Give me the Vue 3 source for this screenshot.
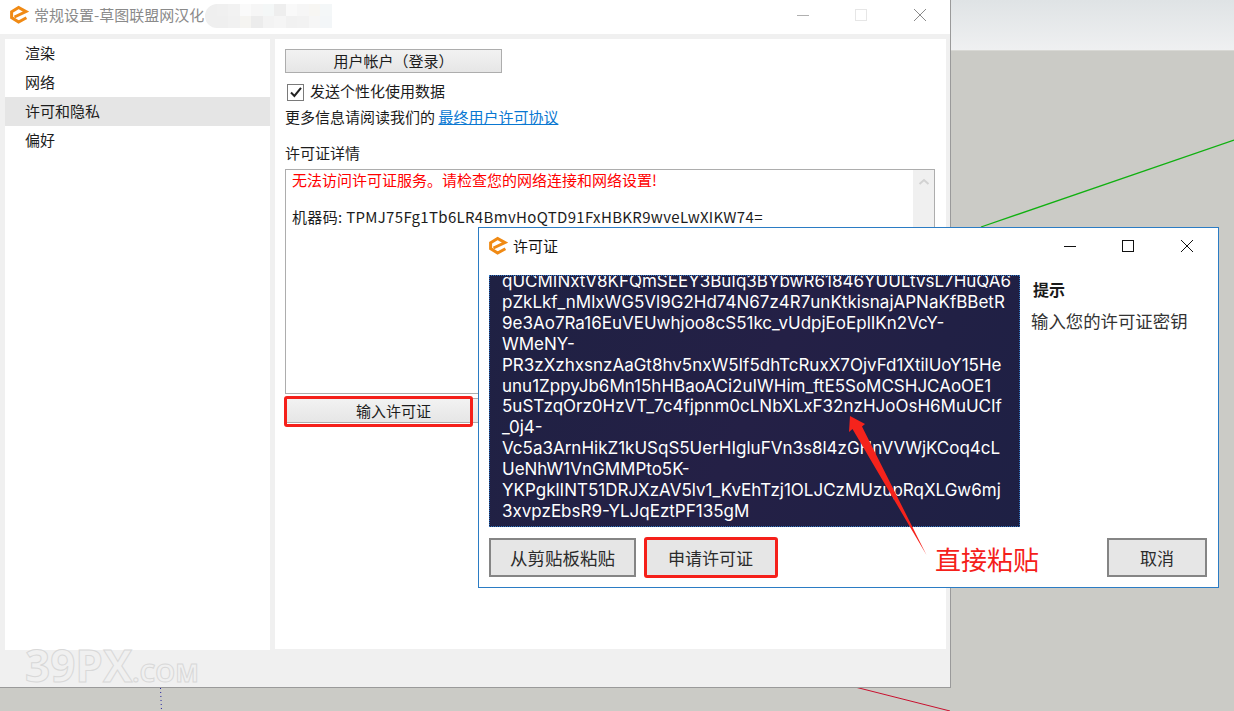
<script setup>
const menu = ['渲染', '网络', '许可和隐私', '偏好']
const keyLines = [
  'qUCMINxtV8KFQmSEEY3BuIq3BYbwR61846YUULtvsL7HuQA6',
  'pZkLkf_nMlxWG5Vl9G2Hd74N67z4R7unKtkisnajAPNaKfBBetR',
  '9e3Ao7Ra16EuVEUwhjoo8cS51kc_vUdpjEoEplIKn2VcY-',
  'WMeNY-',
  'PR3zXzhxsnzAaGt8hv5nxW5If5dhTcRuxX7OjvFd1XtilUoY15He',
  'unu1ZppyJb6Mn15hHBaoACi2uIWHim_ftE5SoMCSHJCAoOE1',
  '5uSTzqOrz0HzVT_7c4fjpnm0cLNbXLxF32nzHJoOsH6MuUCIf',
  '_0j4-',
  'Vc5a3ArnHikZ1kUSqS5UerHIgluFVn3s8l4zGHnVVWjKCoq4cL',
  'UeNhW1VnGMMPto5K-',
  'YKPgklINT51DRJXzAV5lv1_KvEhTzj1OLJCzMUzupRqXLGw6mj',
  '3xvpzEbsR9-YLJqEztPF135gM'
]
const smudge = [
  '#efefef', '#f0f0f0', '#f2f2f2', '#fafafa', '#f6f6f6', '#f4f7f7', '#eeeeee', '#f9f9f9', '#f6f6f6', '#f7f6f3', '#f4f7f8',
  '#efefef', '#efefef', '#f1f1f1', '#f5f4f1', '#ececec', '#f3f3f3', '#f5f5f5', '#f1f1f1', '#f2f2f2', '#f6f6f6', '#f3f6f8'
]
</script>

<template>
  <div class="desktop">
    <div class="sky"></div>
    <svg class="lines" width="1234" height="711" viewBox="0 0 1234 711">
      <line x1="981" y1="227" x2="1234" y2="140" stroke="#10b010" stroke-width="1.3" />
      <line x1="855" y1="687" x2="950" y2="711" stroke="#c8102e" stroke-width="1" />
      <line x1="160.5" y1="688" x2="161.5" y2="711" stroke="#2020a0" stroke-width="1" stroke-dasharray="1 3" />
    </svg>

    <section class="main-win">
      <header class="titlebar">
        <svg class="logo" width="20" height="20" viewBox="0 0 20 20">
          <path d="M5.5 12 L17 6.6 L9.6 2.4 L2.6 6.8 L2.6 12.6 L9.6 17 L17.4 12.8" fill="none" stroke="#f08a14" stroke-width="3" />
        </svg>
        <span class="title-text">常规设置-草图联盟网汉化</span>
        <div class="smudge">
          <i v-for="(c, i) in smudge" :key="i" :style="{ background: c }"></i>
        </div>
        <div class="win-ctrls">
          <svg width="14" height="14" viewBox="0 0 14 14" class="c1"><path d="M1 7.5H13" stroke="#b0b0b0" /></svg>
          <svg width="14" height="14" viewBox="0 0 14 14" class="c2"><rect x="1.5" y="1.5" width="11" height="11" fill="none" stroke="#e6e6e6" /></svg>
          <svg width="14" height="14" viewBox="0 0 14 14" class="c3"><path d="M1 1L13 13M13 1L1 13" stroke="#8a8a8a" /></svg>
        </div>
      </header>
      <div class="win-body">
        <nav class="side">
          <div v-for="m in menu" :key="m" class="side-row" :class="{ active: m === '许可和隐私' }">{{ m }}</div>
        </nav>
        <main class="content">
          <button class="btn-top">用户帐户（登录）</button>
          <label class="check-row">
            <span class="check">
              <svg width="14" height="14" viewBox="0 0 14 14"><path d="M2 7.5L5.4 11L12 2.8" fill="none" stroke="#222" stroke-width="2" /></svg>
            </span>
            <span class="check-label">发送个性化使用数据</span>
          </label>
          <p class="more">更多信息请阅读我们的 <a class="link">最终用户许可协议</a></p>
          <h4 class="details">许可证详情</h4>
          <div class="details-box">
            <div class="details-text">
              <p class="err">无法访问许可证服务。请检查您的网络连接和网络设置!</p>
              <p class="code">机器码: TPMJ75Fg1Tb6LR4BmvHoQTD91FxHBKR9wveLwXIKW74=</p>
            </div>
            <div class="scroll">
              <svg width="12" height="8" viewBox="0 0 12 8"><path d="M1.5 6L6 2L10.5 6" fill="none" stroke="#d2d2d2" stroke-width="2" /></svg>
            </div>
          </div>
          <button class="btn-license">输入许可证</button>
        </main>
      </div>
      <div class="watermark"><span class="wm-big">39PX</span><span class="wm-small">.COM</span></div>
    </section>

    <section class="dialog">
      <header class="dlg-title">
        <svg class="logo" width="20" height="20" viewBox="0 0 20 20">
          <path d="M5.5 12 L17 6.6 L9.6 2.4 L2.6 6.8 L2.6 12.6 L9.6 17 L17.4 12.8" fill="none" stroke="#f08a14" stroke-width="3" />
        </svg>
        <span class="dlg-name">许可证</span>
        <div class="dlg-ctrls">
          <svg width="14" height="14" viewBox="0 0 14 14" class="d1"><path d="M1 7.5H13" stroke="#111" /></svg>
          <svg width="14" height="14" viewBox="0 0 14 14" class="d2"><rect x="1.5" y="1.5" width="11" height="11" fill="none" stroke="#111" /></svg>
          <svg width="14" height="14" viewBox="0 0 14 14"><path d="M1 1L13 13M13 1L1 13" stroke="#111" /></svg>
        </div>
      </header>
      <div class="dlg-main">
        <div class="key-box">
          <div class="key-lines">
            <div v-for="l in keyLines" :key="l">{{ l }}</div>
          </div>
        </div>
        <aside class="hint">
          <div class="hint-h">提示</div>
          <div class="hint-t">输入您的许可证密钥</div>
        </aside>
      </div>
      <footer class="dlg-foot">
        <button class="dbtn paste">从剪贴板粘贴</button>
        <button class="dbtn apply">申请许可证</button>
        <button class="dbtn cancel">取消</button>
      </footer>
    </section>

    <div class="mark mark-license"></div>
    <div class="mark mark-apply"></div>
    <svg class="arrow" width="1234" height="711" viewBox="0 0 1234 711">
      <path d="M926.5 555 L852.5 429 L849 432 L850 416 L865 424 L862 426.5 Z" fill="#f5231c" />
    </svg>
    <div class="note">直接粘贴</div>
  </div>
</template>

<style>
html, body { margin: 0; padding: 0; overflow: hidden; }
</style>

<style scoped>
* { box-sizing: border-box; }
p, h4 { margin: 0; font-weight: 400; }
.desktop {
  position: relative;
  width: 1234px;
  height: 711px;
  overflow: hidden;
  background: #cbcbc6;
  font-family: "Noto Sans CJK SC", "Liberation Sans", sans-serif;
  font-size: 15px;
  color: #1c1c1c;
}
.sky {
  height: 51px;
  background: linear-gradient(#dfe3e5, #eff0f1);
  border-bottom: 1px solid #d8d8d4;
}
.lines { position: absolute; left: 0; top: 0; }
.main-win {
  position: absolute;
  left: 0;
  top: 0;
  width: 951px;
  height: 688px;
  background: #f0f0f0;
  border-right: 1px solid #9a9a9a;
  border-bottom: 1px solid #9a9a9a;
  display: flex;
  flex-direction: column;
}
.titlebar {
  height: 34px;
  flex: none;
  background: #fff;
  display: flex;
  align-items: center;
  padding-left: 9px;
  position: relative;
}
.logo { flex: none; margin-bottom: 4px; }
.title-text { margin-left: 5px; color: #8a8a8a; line-height: 30px; margin-bottom: 4px; }
.smudge {
  position: absolute;
  left: 205px;
  top: 4px;
  width: 127px;
  height: 24px;
  border-radius: 12px 0 0 12px;
  overflow: hidden;
  display: grid;
  grid-template-columns: repeat(11, 1fr);
  grid-template-rows: 12px 12px;
  filter: blur(0.6px);
}
.win-ctrls { margin-left: auto; display: flex; align-items: center; padding-right: 23px; margin-bottom: 4px; }
.c1 { margin-right: 44px; }
.c2 { margin-right: 45px; }
.win-body { display: flex; padding: 5px 4px 0 5px; gap: 5px; height: 611px; flex: none; }
.side { width: 265px; background: #fff; height: 611px; }
.side-row { height: 29px; line-height: 27px; padding-left: 20px; }
.side-row.active { background: #e5e5e5; }
.content { flex: 1; background: #fff; height: 610px; padding: 10px 11px 0 10px; }
.btn-top {
  display: block;
  width: 217px;
  height: 24px;
  padding: 0 0 2px;
  font: inherit;
  color: inherit;
  background: linear-gradient(#f2f2f2, #e6e6e6);
  border: 1px solid #adadad;
}
.check-row { display: flex; align-items: center; height: 20px; margin-top: 9px; padding-left: 2px; gap: 6px; }
.check-label { line-height: 16px; margin-bottom: 3px; }
.check {
  width: 17px;
  height: 17px;
  border: 1px solid #7a7a7a;
  display: flex;
  align-items: center;
  justify-content: center;
  background: #fff;
}
.more { margin-top: 5px; line-height: 20px; }
.link { color: #0a78d2; text-decoration: underline; }
.details { margin-top: 16px; line-height: 20px; }
.details-box {
  margin-top: 6px;
  height: 225px;
  width: 650px;
  border: 1px solid #adadad;
  display: flex;
  justify-content: space-between;
}
.details-text { padding: 0 0 0 6px; line-height: 19px; }
.err { color: #f00; }
.code { margin-top: 18px; letter-spacing: 0.32px; }
.scroll { width: 21px; background: #f0f0f0; display: flex; justify-content: center; padding-top: 8px; }
.btn-license {
  display: block;
  margin-top: 4px;
  width: 217px;
  height: 25px;
  padding: 0;
  font: inherit;
  color: inherit;
  background: linear-gradient(#f2f2f2, #e6e6e6);
  border: 1px solid #adadad;
}
.watermark {
  position: absolute;
  left: 25px;
  top: 642px;
  line-height: 46px;
  font-family: "Open Sans", sans-serif;
  font-weight: 700;
  color: transparent;
  -webkit-text-stroke: 1px #d8d8d8;
  white-space: nowrap;
}
.wm-big { font-size: 44px; }
.wm-small { font-size: 25px; }

.dialog {
  position: absolute;
  left: 478px;
  top: 227px;
  width: 741px;
  height: 361px;
  background: #fff;
  border: 1px solid #2b7cc4;
  display: flex;
  flex-direction: column;
}
.dlg-title { height: 35px; margin-bottom: 12px; flex: none; display: flex; align-items: center; padding: 0 24px 0 9px; }
.dlg-title .logo { margin-bottom: 0; }
.dlg-name { margin-left: 5px; color: #111; }
.dlg-ctrls { margin-left: auto; display: flex; align-items: center; }
.d1 { margin-right: 44px; }
.d2 { margin-right: 45px; }
.dlg-main { display: flex; padding-left: 10px; flex: none; height: 252px; }
.key-box {
  width: 531px;
  height: 252px;
  overflow: hidden;
  border: 1px dotted #2f74c0;
  background: linear-gradient(115deg, #1f2143 0%, #242046 50%, #1e2044 100%);
  color: #fff;
  font-family: Inter, sans-serif;
  font-size: 17px;
  line-height: 20.9px;
  padding-left: 12px;
}
.key-lines { margin-top: -5px; white-space: nowrap; }
.hint { padding: 2px 0 0 11px; }
.hint-h { font-weight: 700; font-size: 16px; line-height: 24px; padding-left: 2px; color: #1a1a1a; }
.hint-t { margin-top: 8px; font-size: 17.4px; line-height: 24px; color: #333; }
.dlg-foot { display: flex; padding: 11px 11px 0 10px; gap: 9px; }
.dbtn {
  height: 39px;
  padding: 0;
  font: inherit;
  font-size: 17px;
  color: #2b2b2b;
  background: #e6e6e6;
  border: 2px solid #858585;
}
.paste { width: 147px; font-size: 17.5px; }
.apply { width: 131px; border-color: #e6e6e6; }
.cancel { width: 100px; margin-left: auto; }

.mark {
  position: absolute;
  border: 3px solid #f5201a;
  border-radius: 3px;
  pointer-events: none;
}
.mark-license { left: 284px; top: 396px; width: 189px; height: 31px; }
.mark-apply { left: 644px; top: 537px; width: 134px; height: 41px; }
.arrow { position: absolute; left: 0; top: 0; pointer-events: none; }
.note {
  position: absolute;
  left: 935px;
  top: 541px;
  font-size: 26px;
  line-height: 36px;
  color: #f5201a;
}
</style>
